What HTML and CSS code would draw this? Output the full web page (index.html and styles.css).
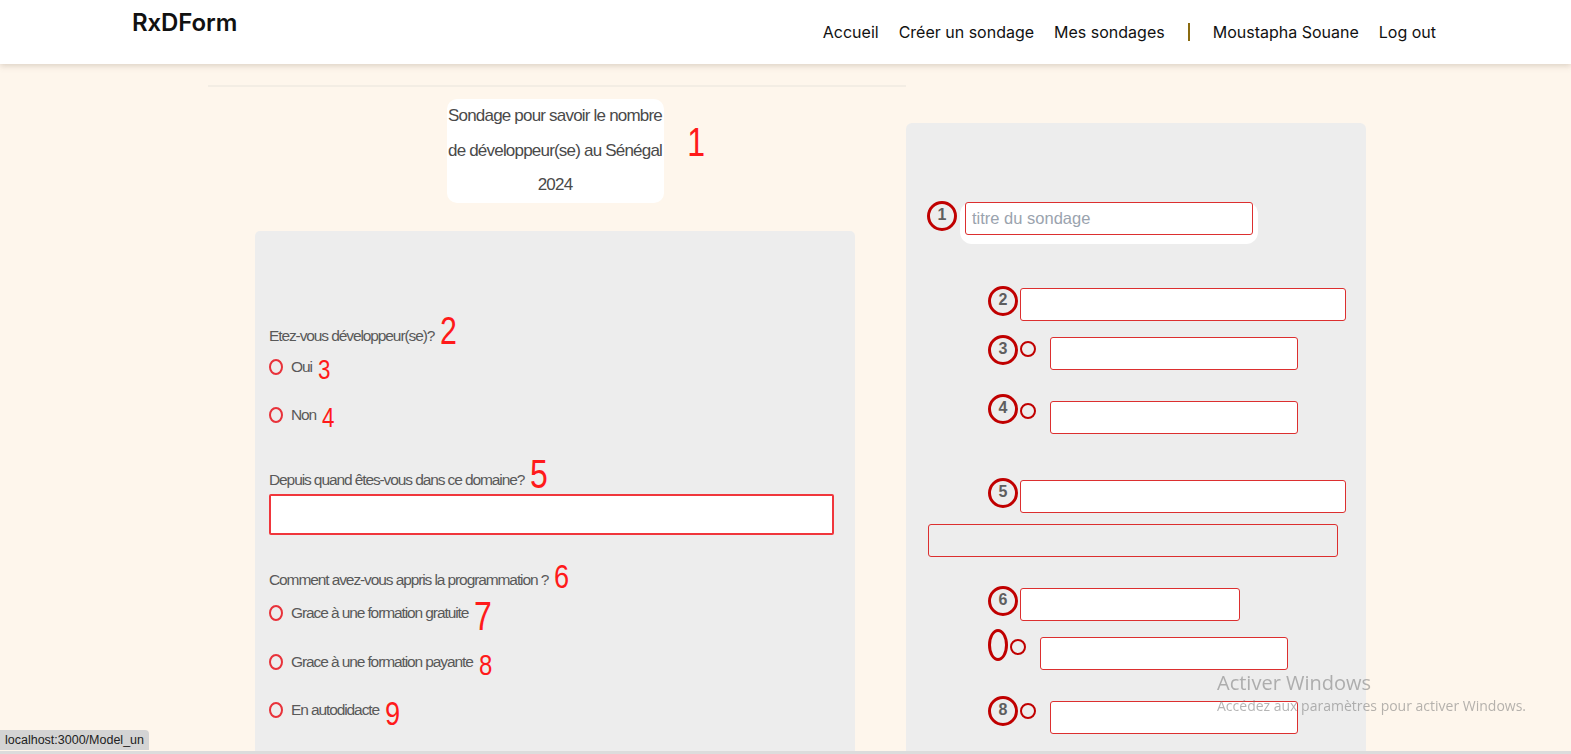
FILE: index.html
```html
<!DOCTYPE html>
<html lang="fr">
<head>
<meta charset="utf-8">
<title>RxDForm</title>
<link rel="stylesheet" href="styles.css">
</head>
<body>
<header class="nav">
  <div class="logo">RxDForm</div>
  <nav class="links">
    <a>Accueil</a>
    <a>Créer un sondage</a>
    <a>Mes sondages</a>
    <span class="sep"></span>
    <a>Moustapha Souane</a>
    <a>Log out</a>
  </nav>
</header>

<main class="page">
  <section class="preview">
    <div class="title-row">
      <div class="title-box">Sondage pour savoir le nombre de développeur(se) au Sénégal 2024<span class="title-num">1</span></div>
    </div>
    <div class="form-card">
      <div class="label l-q1">Etez-vous développeur(se)? <span class="num n-l">2</span></div>
      <div class="opt o-oui"><span class="radio"></span>Oui <span class="num n-s">3</span></div>
      <div class="opt o-non"><span class="radio"></span>Non <span class="num n-s">4</span></div>
      <div class="label l-q5">Depuis quand êtes-vous dans ce domaine? <span class="num n-xl">5</span></div>
      <div class="text-field"></div>
      <div class="label l-q6">Comment avez-vous appris la programmation ? <span class="num n-m">6</span></div>
      <div class="opt o-7"><span class="radio"></span>Grace à une formation gratuite <span class="num n-xl">7</span></div>
      <div class="opt o-8"><span class="radio"></span>Grace à une formation payante <span class="num n-s8">8</span></div>
      <div class="opt o-9"><span class="radio"></span>En autodidacte <span class="num n-m">9</span></div>
    </div>
  </section>

  <section class="editor">
    <div class="row r1">
      <span class="badge">1</span>
      <div class="pill"><div class="field f-title">titre du sondage</div></div>
    </div>
    <div class="row q r2">
      <span class="badge">2</span>
      <div class="field f-q"></div>
    </div>
    <div class="row q r3">
      <span class="badge">3</span>
      <span class="dot"></span>
      <div class="field f-opt"></div>
    </div>
    <div class="row q r4">
      <span class="badge">4</span>
      <span class="dot"></span>
      <div class="field f-opt"></div>
    </div>
    <div class="row q r5">
      <span class="badge">5</span>
      <div class="field f-q"></div>
    </div>
    <div class="field f-wide"></div>
    <div class="row q r6">
      <span class="badge">6</span>
      <div class="field f-short"></div>
    </div>
    <div class="row q r7">
      <span class="badge badge-oval"></span>
      <span class="dot"></span>
      <div class="field f-opt"></div>
    </div>
    <div class="row q r8">
      <span class="badge">8</span>
      <span class="dot"></span>
      <div class="field f-opt"></div>
    </div>
  </section>
</main>

<div class="watermark">
  <div class="wm-title">Activer Windows</div>
  <div class="wm-sub">Accédez aux paramètres pour activer Windows.</div>
</div>
<div class="status">localhost:3000/Model_un</div>
<div class="bottom-edge"></div>
</body>
</html>
```

FILE: styles.css
```css
html, body {
  margin: 0;
  padding: 0;
  overflow: hidden;
  height: 754px;
}
body {
  background: #fef6ec;
  font-family: Inter, "Noto Sans", sans-serif;
  color: #111;
}

/* ---------- navbar ---------- */
.nav {
  position: relative;
  z-index: 2;
  height: 64px;
  background: #fff;
  box-shadow: 0 2px 6px rgba(120, 100, 80, 0.25);
  display: flex;
  justify-content: space-between;
  align-items: flex-start;
  padding: 0 135px 0 132px;
}
.logo {
  font-family: Inter, sans-serif;
  font-weight: 600;
  font-size: 24px;
  padding-top: 8px;
  letter-spacing: -0.1px;
  color: #111;
}
.links {
  display: flex;
  align-items: center;
  height: 64px;
  gap: 20px;
  font-size: 16px;
}
.links a {
  color: #111;
}
.sep {
  width: 2px;
  height: 18px;
  background: #8a6b10;
  margin: 0 3px;
}

/* ---------- layout ---------- */
.page {
  display: flex;
  justify-content: center;
  align-items: flex-start;
  padding-top: 21px;
  padding-left: 3px;
}
.preview {
  width: 698px;
  border-top: 2px solid #f3ede4;
}
.editor {
  width: 460px;
  box-sizing: border-box;
  margin-top: 38px;
  min-height: 700px;
  background: #ededed;
  border-radius: 6px;
  padding: 78px 0 0 21px;
}

/* ---------- preview (left) ---------- */
.title-row {
  display: flex;
  justify-content: center;
  margin-top: 12px;
  padding-right: 4px;
}
.title-box {
  position: relative;
  width: 217px;
  background: #fff;
  border-radius: 10px;
  text-align: center;
  font-family: "Liberation Sans", Arial, sans-serif;
  font-size: 17px;
  letter-spacing: -0.8px;
  line-height: 34.5px;
  color: #4a4a4a;
}
.title-num {
  position: absolute;
  left: 238px;
  top: 22px;
  font-family: "Liberation Sans", Arial, sans-serif;
  font-size: 40px;
  letter-spacing: 0;
  line-height: 42px;
  transform: scaleX(0.8);
  color: #ff1a1a;
}

.form-card {
  width: 600px;
  box-sizing: border-box;
  margin: 28px 0 0 47px;
  min-height: 600px;
  background: #ededed;
  border-radius: 5px;
  padding: 90px 0 0 14px;
  font-family: "Liberation Sans", Arial, sans-serif;
  font-size: 15.5px;
  letter-spacing: -1.1px;
  color: #595959;
}
.label {
  height: 28px;
  line-height: 28px;
  white-space: nowrap;
}
.opt {
  height: 30px;
  line-height: 30px;
  display: flex;
  align-items: center;
  white-space: pre;
}
.radio {
  width: 14px;
  height: 16px;
  box-sizing: border-box;
  border: 2px solid #e8323a;
  border-radius: 50%;
  margin-right: 8px;
}
.num {
  display: inline-block;
  color: #ff1a1a;
  line-height: 0;
  letter-spacing: 0;
  margin-left: 3px;
  position: relative;
  top: 3px;
  transform: scaleX(0.8);
  transform-origin: left center;
}
.n-xl { font-size: 40px; }
.n-l { font-size: 38px; }
.n-m { font-size: 34px; }
.n-s { font-size: 28px; }
.n-s8 { font-size: 30px; }

.l-q1 { margin-top: 1px; }
.o-oui { margin-top: 2px; }
.o-non { margin-top: 18px; }
.l-q5 { margin-top: 36px; }
.text-field {
  width: 565px;
  height: 41px;
  box-sizing: border-box;
  background: #fff;
  border: 2px solid #f0363c;
  border-radius: 2px;
}
.l-q6 { margin-top: 31px; }
.o-7 { margin-top: 4px; }
.o-8 { margin-top: 19px; }
.o-9 { margin-top: 18px; }

/* ---------- editor (right) ---------- */
.row {
  display: flex;
  align-items: flex-start;
}
.row.q {
  margin-left: 61px;
}
.badge {
  flex: none;
  width: 30px;
  height: 30px;
  box-sizing: border-box;
  border: 3px solid #c00000;
  border-radius: 50%;
  font-family: "Liberation Sans", Arial, sans-serif;
  font-weight: bold;
  font-size: 16px;
  line-height: 21px;
  text-align: center;
  color: #5e5e5e;
}
.badge-oval {
  width: 20px;
  height: 32px;
}
.dot {
  flex: none;
  width: 16px;
  height: 16px;
  box-sizing: border-box;
  border: 2px solid #c00000;
  border-radius: 50%;
  margin-left: 2px;
}
.field {
  flex: none;
  height: 33px;
  box-sizing: border-box;
  background: #fff;
  border: 1px solid #dc2f2f;
  border-radius: 3px;
}
.pill {
  margin-left: 3px;
  margin-top: 1px;
  background: #fff;
  border-radius: 12px;
  padding: 0 5px 9px;
}
.f-title {
  width: 288px;
  font-family: "Liberation Sans", Arial, sans-serif;
  font-size: 16.5px;
  line-height: 31px;
  padding-left: 6px;
  color: #9aa3ae;
}
.f-q { width: 326px; margin-left: 2px; margin-top: 2px; }
.f-opt { width: 248px; margin-left: 14px; }
.f-short { width: 220px; margin-left: 2px; margin-top: 2px; }
.f-wide {
  width: 410px;
  margin: 11px 0 0 1px;
  background: transparent;
}

.r2 { margin-top: 42px; }
.r3 { margin-top: 14px; }
.r3 .dot { margin-top: 6px; }
.r3 .f-opt { margin-top: 2px; }
.r4 { margin-top: 24px; }
.r4 .dot { margin-top: 9px; }
.r4 .f-opt { margin-top: 7px; }
.r5 { margin-top: 44px; }
.r6 { margin-top: 29px; }
.r7 { margin-top: 8px; }
.r7 .dot { margin-top: 10px; }
.r7 .f-opt { margin-top: 8px; }
.r8 { margin-top: 26px; }
.r8 .dot { margin-top: 7px; }
.r8 .f-opt { margin-top: 5px; }

/* ---------- overlays ---------- */
.watermark {
  position: fixed;
  left: 1217px;
  top: 670px;
  font-family: "Open Sans", "Noto Sans", sans-serif;
  color: rgba(120, 120, 120, 0.55);
  pointer-events: none;
}
.wm-title {
  font-size: 20px;
  line-height: 26px;
}
.wm-sub {
  font-size: 14px;
  line-height: 20px;
}
.status {
  position: fixed;
  left: 0;
  bottom: 4px;
  height: 20px;
  padding: 0 5px;
  background: #d4d4d4;
  border-top-right-radius: 4px;
  font-family: "Liberation Sans", Arial, sans-serif;
  font-size: 12.5px;
  line-height: 20px;
  color: #222;
}
.bottom-edge {
  position: fixed;
  left: 0;
  right: 0;
  bottom: 0;
  height: 3px;
  background: #dcdcdc;
}
```
